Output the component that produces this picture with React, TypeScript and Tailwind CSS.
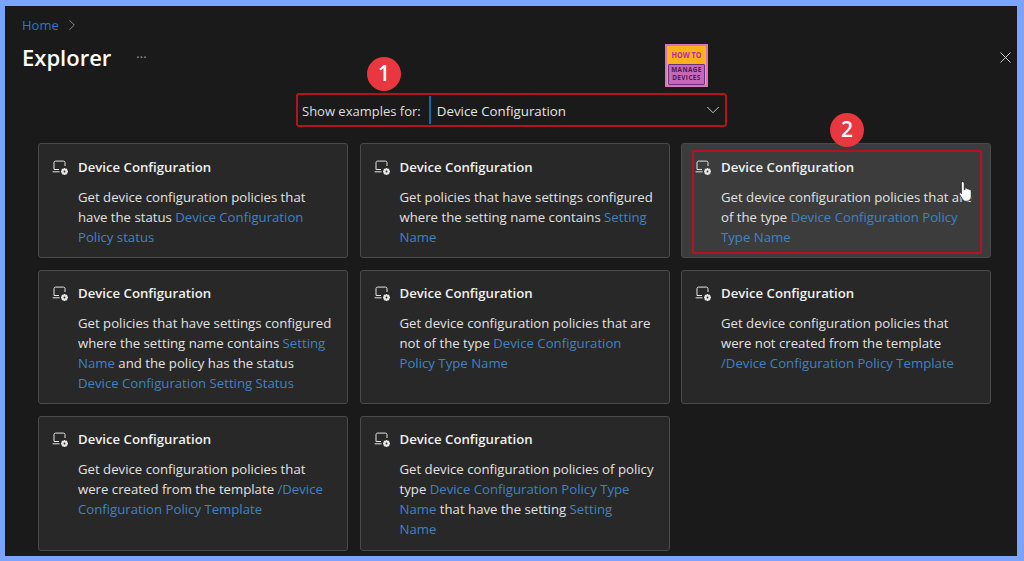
import { ChevronDown, ChevronRight, X } from "lucide-react";

const font = { fontFamily: '"Open Sans", "Noto Sans", sans-serif' };

type Part = { text: string; link?: boolean; breakAfter?: boolean };

interface Example {
  id: number;
  parts: Part[];
}

const rowOne: Example[] = [
  {
    id: 1,
    parts: [
      { text: "Get device configuration policies that have the status " },
      { text: "Device Configuration Policy status", link: true },
    ],
  },
  {
    id: 2,
    parts: [
      { text: "Get policies that have settings configured where the setting name contains " },
      { text: "Setting Name", link: true },
    ],
  },
  {
    id: 3,
    parts: [
      { text: "Get device configuration policies that are of the type " },
      { text: "Device Configuration Policy Type Name", link: true },
    ],
  },
];

const rowTwo: Example[] = [
  {
    id: 4,
    parts: [
      { text: "Get policies that have settings configured where the setting name contains " },
      { text: "Setting Name", link: true },
      { text: " and the policy has the status " },
      { text: "Device Configuration Setting Status", link: true },
    ],
  },
  {
    id: 5,
    parts: [
      { text: "Get device configuration policies that are not of the type " },
      { text: "Device Configuration Policy Type Name", link: true },
    ],
  },
  {
    id: 6,
    parts: [
      { text: "Get device configuration policies that were not created from the template " },
      { text: "/Device Configuration Policy Template", link: true },
    ],
  },
];

const rowThree: Example[] = [
  {
    id: 7,
    parts: [
      { text: "Get device configuration policies that were created from the template " },
      { text: "/Device Configuration Policy Template", link: true },
    ],
  },
  {
    id: 8,
    parts: [
      { text: "Get device configuration policies of policy type " },
      { text: "Device Configuration Policy Type Name", link: true },
      { text: " that have the setting " },
      { text: "Setting", link: true, breakAfter: true },
      { text: "Name", link: true },
    ],
  },
];

function DeviceIcon() {
  return (
    <svg width="17" height="16" viewBox="0 0 17 16" fill="none" className="shrink-0 text-[#e6e6e6]">
      <path
        d="M2 9.500V2.500C2 1.700 2.600 1.100 3.400 1.100h8.200c.8 0 1.400.6 1.400 1.400V6"
        stroke="currentColor"
        strokeWidth="1"
      />
      <path d="M2 9.500h5M.6 11.800h7" stroke="currentColor" strokeWidth="1" />
      <circle cx="12.500" cy="11.500" r="2" stroke="currentColor" strokeWidth="2.200" />
      <path
        d="M12.500 8v1.200M12.500 13.800V15M9 11.500h1.200M14.800 11.500H16M10 9l.8.8M14.200 13.200l.8.8M15 9l-.8.8M10.800 13.200 10 14"
        stroke="currentColor"
        strokeWidth="1.400"
      />
    </svg>
  );
}

function Card({ example, active, lower }: { example: Example; active?: boolean; lower?: boolean }) {
  return (
    <div
      className={`relative rounded-[3px] border border-[#4a4a4a] pl-[13px] pr-[11px] pb-[12px] ${
        lower ? "pt-[13px]" : "pt-[14px]"
      } ${active ? "bg-[#3c3c3c]" : "bg-[#282828]"}`}
    >
      <div className="flex items-center gap-[9px] h-[20px]">
        <DeviceIcon />
        <span className="text-[13.2px] font-semibold text-[#f0f0f0]">Device Configuration</span>
      </div>
      <p className="mt-[9px] ml-[26px] text-[13.2px] leading-[20px] text-[#e2e2e2]">
        {example.parts.map((part) => (
          <span key={part.text} className={part.link ? "text-[#3f82c6]" : undefined}>
            {part.text}
            {part.breakAfter && <br />}
          </span>
        ))}
      </p>
      {active && (
        <>
          <div className="absolute left-[10px] top-[6px] h-[104px] w-[290px] rounded-[2px] border-[2.5px] border-[#b5121f]" />
          <svg width="18" height="24" viewBox="0 0 16 22" className="absolute left-[276px] top-[36px]">
            <path
              d="M4 1.500c1 0 1.500.7 1.500 1.600V9l.6-.2V7.400c1.200-.5 1.800 0 2 .8.8-.5 1.600-.2 1.900.7.9-.4 1.800 0 1.900 1v5c0 2.500-1.600 4.600-4 4.600H7c-1.600 0-2.500-.8-3.300-2.100L1 13c-.5-1 .3-1.900 1.200-1.500l.6 1V3.100C2.800 2.200 3.200 1.500 4 1.500z"
              fill="#fff"
              stroke="#222"
              strokeWidth="0.8"
            />
          </svg>
        </>
      )}
    </div>
  );
}

function Badge({ label, className }: { label: string; className: string }) {
  return (
    <div
      className={`absolute flex h-[34px] w-[34px] items-center justify-center rounded-full bg-[#e8373f] text-[21px] font-semibold text-white ${className}`}
    >
      {label}
    </div>
  );
}

function Logo() {
  return (
    <div className="absolute left-[660px] top-[38px] flex h-[43px] w-[43px] flex-col border-[2px] border-[#d874b8] bg-[#ffb21a] pt-[3px] text-center font-bold leading-none text-[#c026b0]">
      <span className="scale-x-[0.8] text-[9px] leading-[11px]">HOW TO</span>
      <div className="mx-[1px] mt-[4px] flex-1 rounded-[1px] border border-[#6b2d7d] bg-[#c668b8] pt-[1px] text-[7px] leading-[8px] tracking-[0.5px] text-[#4b1a52]">
        <div className="scale-x-[0.9]">MANAGE</div>
        <div className="scale-x-[0.9]">DEVICES</div>
      </div>
    </div>
  );
}

export default function App() {
  return (
    <div style={font} className="h-[561px] w-[1024px] overflow-hidden bg-[#7ba3ff] pl-[5px] pr-[7px] pt-[6px] pb-[5px]">
      <div className="relative h-full bg-[#1a1a1a] pl-[17px] pr-[26px]">
        <div className="flex items-center gap-[4px] pt-[10px] text-[13px] leading-[18px]">
          <span className="text-[#2b78c2]">Home</span>
          <ChevronRight size={18} strokeWidth={1} className="text-[#aaa]" />
        </div>

        <div className="mt-[5px] flex h-[36px] items-center">
          <h1 className="text-[22px] font-semibold text-white">Explorer</h1>
          <span className="ml-[25px] text-[13px] leading-none text-[#9a9a9a]">···</span>
          <X size={19} strokeWidth={1.2} className="absolute right-[2px] top-[42px] text-[#d5d5d5]" />
        </div>

        <div className="mt-[18px] flex justify-center pl-[10px]">
          <div className="flex h-[34px] w-[431px] items-center rounded-[3px] border-[2.5px] border-[#b5121f] pl-[4px] pr-[1px]">
            <span className="pt-[3px] text-[13px] text-[#dedede]">Show examples for:</span>
            <div className="ml-[8px] h-[28px] w-[2px] bg-[#1668ad]" />
            <span className="ml-[6px] flex-1 pt-[3px] text-[13.3px] text-[#e4e4e4]">Device Configuration</span>
            <ChevronDown size={22} strokeWidth={1} className="text-[#d5d5d5]" />
          </div>
        </div>

        <div className="ml-[16px] mt-[16px] grid grid-cols-3 gap-x-[11.5px] gap-y-[12px]">
          {rowOne.map((ex) => (
            <div key={ex.id} className="h-[115px] [&>div]:h-full">
              <Card example={ex} active={ex.id === 3} />
            </div>
          ))}
          {rowTwo.map((ex) => (
            <div key={ex.id} className="h-[134px] [&>div]:h-full">
              <Card example={ex} lower />
            </div>
          ))}
          {rowThree.map((ex) => (
            <div key={ex.id} className="h-[135px] [&>div]:h-full">
              <Card example={ex} lower />
            </div>
          ))}
        </div>

        <Badge label="1" className="left-[362px] top-[51px]" />
        <Badge label="2" className="left-[825px] top-[107px]" />
        <Logo />
      </div>
    </div>
  );
}
